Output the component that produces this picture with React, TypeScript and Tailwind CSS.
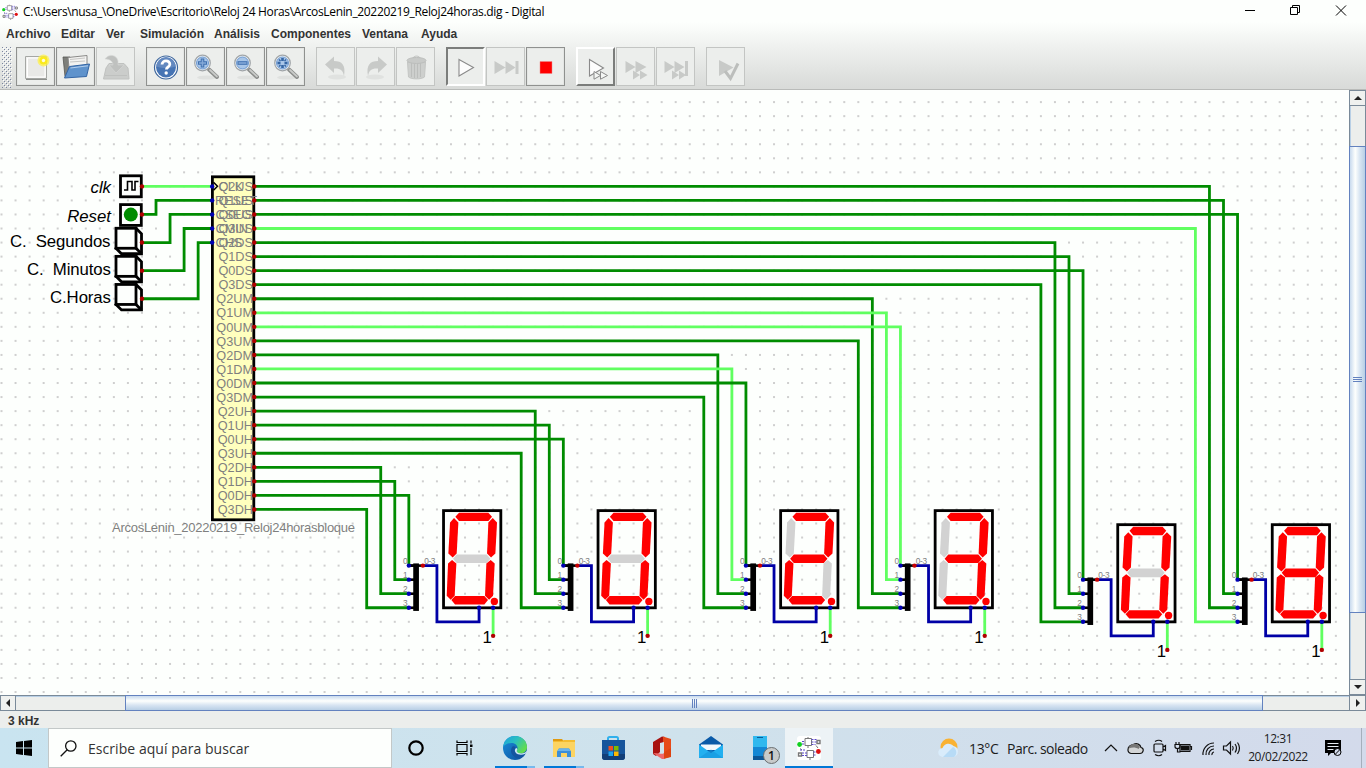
import type { ReactNode } from 'react';

const P = 14.046;
const X = (n: number) => 1.5 + P * n;
const Y = (n: number) => 12.1 + P * n;

const DARK = '#008c00';
const LIGHT = '#60ff60';
const BLUE = '#0000a6';
const RED = '#b00000';

const OUTPUTS = [
  'Q2US', 'Q1US', 'Q0US', 'Q3US', 'Q2DS', 'Q1DS', 'Q0DS', 'Q3DS',
  'Q2UM', 'Q1UM', 'Q0UM', 'Q3UM', 'Q2DM', 'Q1DM', 'Q0DM', 'Q3DM',
  'Q2UH', 'Q1UH', 'Q0UH', 'Q3UH', 'Q2DH', 'Q1DH', 'Q0DH', 'Q3DH',
];
const HIGH = [3, 9, 10, 13];

const SEGMENTS: Record<string, string> = {
  a: '196,50 207,38 295,38 306,50 295,63 207,63',
  b: '308,54 321,67 316,160 303,172 291,160 295,67',
  f: '192,54 205,67 200,160 188,172 175,160 180,67',
  g: '189,176 200,163 290,163 301,176 290,189 200,189',
  e: '186,180 199,190 194,287 182,299 170,287 174,190',
  c: '302,180 314,190 309,287 297,299 285,287 289,190',
  d: '184,300 195,288 283,288 294,300 283,313 195,313',
};

const BLOCKS = [
  { col: 29, row: 33, first: 20, on: 'abcdef' },
  { col: 40, row: 33, first: 16, on: 'abcdef' },
  { col: 53, row: 33, first: 12, on: 'abged' },
  { col: 64, row: 33, first: 8, on: 'abgcd' },
  { col: 77, row: 34, first: 4, on: 'abcdef' },
  { col: 88, row: 34, first: 0, on: 'abcdefg' },
];

function Wire({ pts, color = DARK }: { pts: [number, number][]; color?: string }) {
  return (
    <polyline
      points={pts.map(([c, r]) => `${X(c)},${Y(r)}`).join(' ')}
      fill="none"
      stroke={color}
      strokeWidth="2.8"
    />
  );
}

function Pin({ c, r, color }: { c: number; r: number; color: string }) {
  return <circle cx={X(c)} cy={Y(r)} r="2.2" fill={color} />;
}

function Block({ col, row, first, on }: (typeof BLOCKS)[number]) {
  const x = X(col);
  const y = Y(row);
  return (
    <g>
      {[2, 1, 0, 3].map((bit, k) => (
        <Wire
          key={bit}
          color={HIGH.includes(first + k) ? LIGHT : DARK}
          pts={[[18, 6 + first + k], [col - bit, 6 + first + k], [col - bit, row + bit], [col, row + bit]]}
        />
      ))}
      <Wire color={BLUE} pts={[[col + 1, row], [col + 2, row], [col + 2, row + 4], [col + 5, row + 4], [col + 5, row + 3]]} />
      <Wire color={LIGHT} pts={[[col + 6, row + 3], [col + 6, row + 5]]} />
      <rect x={x + 4.4} y={y - 2.2} width="5.7" height="47.5" fill="#000" />
      <path d={`M${x + 1} ${y}H${x + 13}`} stroke="#000" strokeWidth="2.6" />
      {[0, 1, 2, 3].map((b) => (
        <g key={b}>
          <path d={`M${x + 1} ${y + b * P}h6`} stroke="#000" strokeWidth="2.6" />
          <Pin c={col} r={row + b} color="#0000b4" />
          <text x={x - 1.2} y={y + b * P - 1.6} textAnchor="end" fontSize="8.3" fill="#808080">{b}</text>
        </g>
      ))}
      <Pin c={col + 1} r={row} color="#c80000" />
      <text x={x + 15.3} y={y - 1.6} fontSize="8.3" fill="#808080" textLength="11.3">0-3</text>
      <rect x={x + 34.7} y={y - 55} width="57.3" height="97.2" fill="none" stroke="#000" strokeWidth="2.8" />
      <g transform={`translate(${x - 18.8} ${y - 65.5}) scale(0.33333)`}>
        {Object.entries(SEGMENTS).map(([k, p]) => (
          <polygon key={k} points={p} fill={on.includes(k) ? '#ff0000' : '#d2d2d2'} />
        ))}
        <circle cx="313" cy="304" r="11" fill="#ff0000" />
      </g>
      <Pin c={col + 5} r={row + 3} color="#0000b4" />
      <Pin c={col + 6} r={row + 3} color="#0000b4" />
      <Pin c={col + 6} r={row + 5} color={RED} />
      <text x={X(col + 6) - 1.2} y={Y(row + 5) + 7} textAnchor="end" fontSize="16.8" fill="#000">1</text>
    </g>
  );
}

function PushButton({ row }: { row: number }) {
  const t = Y(row) - 14.3;
  return (
    <g fill="#fdfffd" stroke="#000" strokeWidth="2.8" strokeLinejoin="miter">
      <path d={`M136 ${t}l5.500 5.500v20H121.500l-5.500-5.500z`} />
      <rect x="116" y={t} width="20" height="20" />
      <path d={`M136 ${t + 20}l5.500 5.500`} />
    </g>
  );
}

function Circuit() {
  return (
    <svg width="1349" height="605" className="block shrink-0 bg-[#fdfffd] font-['Liberation_Sans',sans-serif]">
      <g fill="#cfcfcf">
        {Array.from({ length: 43 }, (_, r) =>
          Array.from({ length: 96 }, (_, c) => (
            <rect key={`${r}-${c}`} x={X(c) - 1} y={Y(r) - 1} width="2" height="2" />
          ))
        )}
      </g>
      <Wire color={LIGHT} pts={[[10, 6], [15, 6]]} />
      <Wire pts={[[10, 8], [11, 8], [11, 7], [15, 7]]} />
      <Wire pts={[[10, 10], [12, 10], [12, 8], [15, 8]]} />
      <Wire pts={[[10, 12], [13, 12], [13, 9], [15, 9]]} />
      <Wire pts={[[10, 14], [14, 14], [14, 10], [15, 10]]} />

      <g fontSize="16.8" fill="#000" textAnchor="end">
        <text x="111" y="103" fontStyle="italic">clk</text>
        <text x="111" y="132" fontStyle="italic">Reset</text>
        <text x="110.5" y="157" textLength="100.5">C.&#160; Segundos</text>
        <text x="111" y="185" textLength="84">C.&#160; Minutos</text>
        <text x="111" y="213" textLength="61">C.Horas</text>
      </g>

      <rect x="120.5" y="85.8" width="20.8" height="21" fill="#fdfffd" stroke="#000" strokeWidth="2.8" />
      <path d="M124 100h3.500v-8.500h4.500V100h3v-8.500h3.500" fill="none" stroke="#000" strokeWidth="1.6" />
      <rect x="120.5" y="114.600" width="20.8" height="20.8" fill="#fdfffd" stroke="#000" strokeWidth="2.8" />
      <circle cx="130.8" cy="124.6" r="7" fill="#008c00" />
      <PushButton row={10} />
      <PushButton row={12} />
      <PushButton row={14} />

      {BLOCKS.slice().reverse().map((b) => (
        <Block key={b.col} {...b} />
      ))}

      <rect x="212.4" y="86.8" width="41.4" height="343" fill="#ffffbe" stroke="#000" strokeWidth="2.8" />
      <path d="M213.500 92.300l4 4-4 4" fill="none" stroke="#000" strokeWidth="1.5" />
      <g fontSize="12.7" fill="#7f7f7f">
        {OUTPUTS.map((t, i) => (
          <text key={t} x="253" y={Y(6 + i) + 4.7} textAnchor="end">{t}</text>
        ))}
        <text x="218.5" y={Y(6) + 4.7}>CLK</text>
        <text x="215" y={Y(7) + 4.7} textLength="42">RESET</text>
        <text x="215.5" y={Y(8) + 4.7}>CSEG</text>
        <text x="215.5" y={Y(9) + 4.7}>CMIN</text>
        <text x="215.5" y={Y(10) + 4.7}>CHS</text>
        <text x="112" y="442" fontSize="13" textLength="243">ArcosLenin_20220219_Reloj24horasbloque</text>
      </g>
      {[6, 7, 8, 9, 10].map((r) => (
        <Pin key={r} c={15} r={r} color="#0000b4" />
      ))}
      {[6, 8, 10, 12, 14].map((r) => (
        <Pin key={r} c={10} r={r} color={RED} />
      ))}
      {OUTPUTS.map((t, i) => (
        <Pin key={t} c={18} r={6 + i} color={RED} />
      ))}
    </svg>
  );
}

function DigitalIcon({ size }: { size: number }) {
  return (
    <svg width={size} height={size} viewBox="0 0 24 24">
      <rect width="24" height="24" rx="3" fill="#fff" />
      <g fill="none" stroke="#777" strokeWidth="1">
        <path d="M8 2.500h6.500v7H8zM11 1v1M11 10v2" />
        <path d="M10 14.500h6.500v7H10z" />
        <path d="M20 4.500h3v3h-3zM1.500 17h3v3h-3z" strokeWidth="1.4" />
        <path d="M21 12l-2-2.500M3 12.500l2 1.500M13 22v2" />
      </g>
      <path d="M5 5.500h3M5 8h3M14.500 3.500H20M14.500 6H20M14.500 8.500h4M5 17h5M5 19.500h5M3 14h6M16.500 16h4M16.500 19h3" stroke="#5a48c8" strokeWidth="1" strokeDasharray="2 1" />
      <circle cx="2.6" cy="8.5" r="2.4" fill="#10d020" />
      <circle cx="21.4" cy="15.5" r="2.4" fill="#e01010" />
    </svg>
  );
}

const BTN: Record<string, string> = {
  normal: 'border border-[#8f918f] outline outline-1 -outline-offset-2 outline-[#dfe1df]/60',
  off: 'border border-[#c3c5c3]',
  down: 'border-2 border-t-[#7b7d7b] border-l-[#7b7d7b] border-b-white border-r-white',
  up: 'border-2 border-t-white border-l-white border-b-[#7b7d7b] border-r-[#7b7d7b]',
};

function Tool({ kind = 'normal', children }: { kind?: string; children: ReactNode }) {
  return (
    <button className={`flex h-[39px] w-[39px] shrink-0 items-center justify-center bg-[#eceeec] ${BTN[kind]}`}>
      <svg width="32" height="32" viewBox="0 0 32 32" className="shrink-0" fill="none">{children}</svg>
    </button>
  );
}

function Lens({ children }: { children: ReactNode }) {
  return (
    <>
      <ellipse cx="17" cy="26.5" rx="10" ry="2" fill="#dfe1df" />
      <path d="M19 18.500l8 7.500" stroke="#8a8c8a" strokeWidth="4" strokeLinecap="round" />
      <path d="M20 19l7 6.500" stroke="#c8cac8" strokeWidth="1.8" strokeLinecap="round" />
      <circle cx="12.5" cy="12" r="7.8" fill="#eef2f5" stroke="#a0a5a8" strokeWidth="1.2" />
      <circle cx="12.5" cy="12" r="6" fill="#a9c6e8" stroke="#6f9bd2" />
      {children}
    </>
  );
}

const Sep = () => <div className="w-[9px] shrink-0" />;

const MENU: [string, string][] = [
  ['Archivo', 'w-[55px]'], ['Editar', 'w-[45px]'], ['Ver', 'w-[34px]'], ['Simulación', 'w-[74px]'],
  ['Análisis', 'w-[57px]'], ['Componentes', 'w-[91px]'], ['Ventana', 'w-[59px]'], ['Ayuda', 'w-[50px]'],
];

function Toolbar() {
  return (
    <div className="flex h-[46px] items-start gap-px pt-[4px] pl-[2px]">
      <svg width="13" height="41" className="shrink-0">
        <defs>
          <pattern id="grip" width="4" height="4" patternUnits="userSpaceOnUse">
            <rect width="1" height="1" fill="#7c86a0" /><rect x="2" y="2" width="1" height="1" fill="#7c86a0" />
            <rect x="1" y="1" width="1" height="1" fill="#fff" /><rect x="3" y="3" width="1" height="1" fill="#fff" />
          </pattern>
        </defs>
        <rect width="10" height="41" fill="url(#grip)" />
      </svg>
      <Tool>
        <path d="M5.500 5.500h21v22h-21z" fill="#f0f0ee" stroke="#a5a7a4" />
        <path d="M7.500 7h17.500v19H7.500z" fill="#e9e9e7" stroke="#fff" /><path d="M6 28.500h21" stroke="#8d8f8c" />
        <circle cx="23.500" cy="9.500" r="6" fill="#fdf04a" opacity=".75" /><circle cx="23.500" cy="9.500" r="4" fill="#fbea1c" /><circle cx="23.500" cy="9.500" r="1.700" fill="#fffce0" />
      </Tool>
      <Tool>
        <path d="M3 6h7l2 2h12v16l-19 1.500z" fill="#7d7f7a" stroke="#555753" strokeWidth=".8" />
        <path d="M8 6.500l19-2v12H9z" fill="#f3f3f1" stroke="#8a8a88" />
        <path d="M10 8.500l15-1.500M10 11l15-1" stroke="#c6c6c4" />
        <path d="M9.500 15.500l20-2.500-3 12.500L4.500 27z" fill="#5f93cc" stroke="#3465a4" />
        <path d="M10.500 17l17.500-2.200" stroke="#b4cfee" />
      </Tool>
      <Tool kind="off">
        <path d="M6 17l3-4.500h15l4 4.500 1 11H3.500z" fill="#cbcdcb" stroke="#c0c2c0" />
        <path d="M5 8c4-6 12-4 13 2v4h6l-8 8-7-8h4c0-4-4-6-8-6z" fill="#bfc1bf" stroke="#d6d8d6" strokeWidth=".6" />
        <path d="M5 24.500h22" stroke="#bfc1bf" />
      </Tool>
      <Sep />
      <Tool>
        <circle cx="16" cy="16.500" r="11.500" fill="#fff" stroke="#3c659c" strokeWidth="1.2" />
        <circle cx="16" cy="16.500" r="9.900" fill="#4674b4" />
        <path d="M6.500 15.500a9.500 9.500 0 0 1 19 0c-7 2-12 2-19 0z" fill="#6389c0" />
        <path d="M12 13.500c.2-5 8.200-4.500 7.800 0-.2 2.700-3.400 2.300-3.400 5" stroke="#fff" strokeWidth="2.800" /><circle cx="16.200" cy="22" r="1.700" fill="#fff" />
      </Tool>
      <Tool><Lens><path d="M12.500 7.500v9M8 12h9" stroke="#3f70b0" strokeWidth="3.600" /><path d="M12.500 8.500v7M9 12h7" stroke="#84a9d8" strokeWidth="1.600" /></Lens></Tool>
      <Tool><Lens><path d="M7.500 12h10" stroke="#3f70b0" strokeWidth="3.600" /><path d="M8.500 12h8" stroke="#84a9d8" strokeWidth="1.600" /></Lens></Tool>
      <Tool><Lens><path d="M12.500 7v3M12.500 14v3M7.500 12h3M14.500 12h3" stroke="#3465a4" strokeWidth="2.600" /><path d="M9 8.500l1.500 1.500M16 8.500L14.500 10M9 15.500l1.500-1.500M16 15.500L14.500 14" stroke="#3465a4" strokeWidth="1.400" /></Lens></Tool>
      <Sep />
      <Tool kind="off">
        <ellipse cx="17" cy="26" rx="9" ry="2.500" fill="#e0e2e0" />
        <path d="M5 13.500l9-8v4.500c8 0 12 4 10 15-1-6-4-8-10-7.500V22z" fill="#c8cac8" />
      </Tool>
      <Tool kind="off">
        <ellipse cx="15" cy="26" rx="9" ry="2.500" fill="#e0e2e0" />
        <path d="M27 13.500l-9-8v4.500c-8 0-12 4-10 15 1-6 4-8 10-7.500V22z" fill="#c8cac8" />
      </Tool>
      <Tool kind="off">
        <path d="M7.500 11h18l-1 15c-3 2.500-13 2.500-16 0z" fill="#cdcfcd" stroke="#c4c6c4" />
        <path d="M11.500 12v14M14.500 13v14M17.500 13v14M20.500 12v14" stroke="#bcbebc" />
        <ellipse cx="16.500" cy="9.500" rx="9.500" ry="3" fill="#c8cac8" stroke="#bcbebc" /><path d="M13 7c1-2.500 6-2.500 7 0" stroke="#bcbebc" />
      </Tool>
      <Sep />
      <Tool kind="down"><path d="M9 8.500l14.500 8L9 25z" fill="#fdfdfd" stroke="#8a8a8a" strokeWidth="1.1" /></Tool>
      <Tool kind="off"><path d="M4.500 10l11 6.500-11 6.500zM15.500 10l10 6.500-10 6.500z" fill="#c8cac8" /><path d="M27 10v13" stroke="#c8cac8" strokeWidth="3" /></Tool>
      <Tool><path d="M10 10.500h12v12H10z" fill="#f00" stroke="#e88" strokeWidth=".5" /></Tool>
      <Sep />
      <Tool kind="up">
        <path d="M9.500 8.500l14 8.500-14 8z" fill="#fdfdfd" stroke="#8a8a8a" strokeWidth="1.1" />
        <path d="M14 20.500l6.500 4-6.500 3.700zM20.500 20.500l7 4-7 3.700z" fill="#f4f6f4" stroke="#8a8a8a" strokeWidth="1" />
      </Tool>
      <Tool kind="off"><path d="M5.500 10l10 6-10 6zM15.500 10l11 6-11 6zM13 19.500l7 4.500-7 4.500zM20 19.500l7.500 4.500-7.500 4.500z" fill="#c8cac8" /></Tool>
      <Tool kind="off"><path d="M4.500 10l10 6-10 6zM14.500 10l10 6-10 6zM12 19.500l7 4.500-7 4.500zM19 19.500l7 4.500-7 4.500z" fill="#c8cac8" /><path d="M26.500 10v15" stroke="#c8cac8" strokeWidth="3" /></Tool>
      <Sep />
      <Tool kind="off">
        <path d="M9 9l14.500 7.500L9 25z" fill="#c8cac8" /><path d="M15 20l5.500 7.500L28 12.500" stroke="#bcbebc" strokeWidth="3" />
      </Tool>
    </div>
  );
}

function Tri({ d, className }: { d: string; className: string }) {
  return (
    <div className={`flex shrink-0 items-center justify-center border border-[#7a8a99] bg-[#eff1ef] ${className}`}>
      <svg width="8" height="8" viewBox="0 0 8 8"><path d={d} fill="#222" /></svg>
    </div>
  );
}

function TaskIcon({ children, run = false }: { children: ReactNode; run?: boolean }) {
  return (
    <div className="flex h-10 w-[49px] shrink-0 flex-col items-center">
      <div className="flex h-[38px] items-center justify-center pt-0.5">
        <svg width="26" height="26" viewBox="0 0 26 26" fill="none">{children}</svg>
      </div>
      {run && <div className="flex h-0.5 w-10"><div className="w-8 bg-[#0078d7]" /><div className="w-2 bg-[#76b9ed]" /></div>}
    </div>
  );
}

function Taskbar() {
  return (
    <div className="flex h-10 items-center bg-linear-to-r from-[#c9e4f0] via-[#cfe2ec] to-[#d3daeb] font-['Open_Sans',sans-serif] text-[#1c1c1c]">
      <div className="flex w-12 shrink-0 justify-center">
        <svg width="16" height="16" viewBox="0 0 16 16"><path d="M0 2l7-1v6.500H0zM8 .9L16 0v7.500H8zM0 8.500h7V15l-7-1zM8 8.500h8V16l-8-1z" fill="#000" /></svg>
      </div>
      <div className="flex h-10 w-[344px] shrink-0 items-center border border-[#c3c8c8] bg-[#fdfffd] pl-[11px]">
        <svg width="17" height="17" viewBox="0 0 17 17" fill="none" stroke="#111" strokeWidth="1.3"><circle cx="10.8" cy="6" r="5.2" /><path d="M7.200 9.800L.7 16.300" /></svg>
        <span className="ml-[11px] text-[14px] tracking-[0.05px] whitespace-nowrap text-[#333]">Escribe aquí para buscar</span>
      </div>
      <div className="flex w-12 shrink-0 justify-center"><svg width="18" height="18"><circle cx="9" cy="9" r="6.700" fill="none" stroke="#000" strokeWidth="2.2" /></svg></div>
      <div className="mr-0.5 flex w-12 shrink-0 justify-center">
        <svg width="17" height="16" viewBox="0 0 17 16" fill="none" stroke="#000" strokeWidth="1.2"><path d="M1 4.500h10v7H1zM1 .5v2h10v-2M1 15.500v-2h10v2M15 .5v3M15 8v7" /><path d="M14 4.500h2.500V7H14z" fill="#000" stroke="none" /></svg>
      </div>
      <TaskIcon run>
        <defs>
          <linearGradient id="eg" x1="0" y1="0" x2="1" y2=".6"><stop offset="0" stopColor="#1ba0e0" /><stop offset=".5" stopColor="#2bbfc0" /><stop offset="1" stopColor="#62dd4c" /></linearGradient>
          <linearGradient id="eb" x1="0" y1="0" x2="1" y2="1"><stop offset="0" stopColor="#1b8fdc" /><stop offset="1" stopColor="#0c4c9a" /></linearGradient>
        </defs>
        <circle cx="13" cy="13" r="12" fill="url(#eb)" />
        <path d="M1.200 12C2 5 7 1 13 1c8 0 12 6 12 11 0 4-3 6.500-6.500 6.500-3 0-4.500-1.500-3.500-3.500 2-4-2-7-5.500-7-4 0-7 2-8.300 4z" fill="url(#eg)" />
        <path d="M10 12c-2 4-1 8 4 11 4 1 7-.5 9-4-3 1.500-7.500 1-9.500-1.500-1.500-2-1-3.500.3-4.500-.8-2-2.800-2.500-3.800-1z" fill="#1554a0" />
        <path d="M14 13c-1.500 1.500-1.500 3.500 0 5s5 2.500 9.500.8l2.500-3.800c-3 3.500-6.500 4-9.500 3-2-1-2-2-1.300-3.200.3-.8 0-1.500-1.200-1.800z" fill="#d0e8f2" />
      </TaskIcon>
      <TaskIcon run>
        <path d="M2 4h9l2 2.500H2z" fill="#e09a10" /><path d="M2 6h22v16H2z" fill="#fcd462" /><path d="M2 6h9l2-1h11v2H2z" fill="#f4bc30" />
        <path d="M6 22v-5.500l2-3h10l2 3V22h-4v-4h-6v4z" fill="#3a8ed8" /><path d="M8 13.500h10l1.500 2.500h-13z" fill="#6ab4ec" />
      </TaskIcon>
      <TaskIcon>
        <path d="M8 8V3.500q0-1.500 1.500-1.500h7Q18 2 18 3.500V8" stroke="#30b0ec" strokeWidth="2" />
        <path d="M2 5h23v17q0 3-3 3H5q-3 0-3-3z" fill="#17559c" /><path d="M2 19h23v3q0 3-3 3H5q-3 0-3-3z" fill="#133f78" />
        <path d="M8.500 11H13v4.500H8.500z" fill="#f25022" /><path d="M14 11h4.500v4.500H14z" fill="#7fba00" /><path d="M8.500 16.500H13V21H8.500z" fill="#1da5f0" /><path d="M14 16.500h4.500V21H14z" fill="#ffb900" />
      </TaskIcon>
      <TaskIcon>
        <path d="M4 7l9-5.500 3 .5v5l-5 2v8l-4 4-3-2z" fill="#a81210" /><path d="M14 1.500l8 2.500v17.500L14 24z" fill="#e64a19" /><path d="M22 13v9l-8 2v-6z" fill="#dc4310" /><path d="M4 18l7 .5h4V24h-2z" fill="#f06868" />
        <path d="M11 8l4-1v11.500h-4z" fill="#d0e2ec" />
      </TaskIcon>
      <TaskIcon>
        <path d="M1 9.500L13 1l12 8.500V23H1z" fill="#0a5aa8" /><path d="M3 9.500h20V15H3z" fill="#f2f8fc" /><path d="M1 9.500L13 18 25 9.500V23H1z" fill="#22b0f0" /><path d="M1 23l12-8.500L25 23z" fill="#1696dc" opacity=".6" />
      </TaskIcon>
      <TaskIcon>
        <path d="M6 1h14v24H6z" fill="#1487d4" /><path d="M6 1h14v11H6z" fill="#30b8ee" /><path d="M6 21h14v4H6z" fill="#0d5696" /><path d="M10 2.500h6" stroke="#0b5c98" />
      </TaskIcon>
      <div className="mr-[4px] mb-[4px] -ml-[21px] flex h-[17px] w-[17px] shrink-0 items-center justify-center self-end rounded-full border border-[#6a6e70] bg-[#c8caca] text-[12px] font-semibold text-[#111]">1</div>
      <div className="ml-px flex h-10 w-12 shrink-0 flex-col bg-[#edf3f6]">
        <div className="flex h-[38px] items-center justify-center pt-0.5"><DigitalIcon size={24} /></div>
        <div className="h-0.5 bg-[#0078d7]" />
      </div>
      <div className="flex h-10 flex-1 items-center pl-[104px]">
        <svg width="24" height="22" viewBox="0 0 24 22" className="shrink-0"><circle cx="12" cy="10" r="8.500" fill="#f9b233" /><path d="M6 20a4.500 4.500 0 0 1-.5-9 6.500 6.500 0 0 1 11-2A5.700 5.700 0 0 1 17 20z" fill="#d9ecfb" /><path d="M6 20l10-10a6 6 0 0 1 1 10z" fill="#b7dbf6" /></svg>
        <span className="ml-[8px] w-[38px] shrink-0 text-[14px] tracking-[-0.35px] whitespace-nowrap">13°C</span>
        <span className="w-[97px] shrink-0 text-[14px] tracking-[-0.5px] whitespace-nowrap">Parc. soleado</span>
        <svg width="140" height="20" viewBox="1104 0 140 20" className="shrink-0" fill="none" stroke="#111" strokeWidth="1.2">
          <path d="M1105 13l6-6 6 6" />
          <path d="M1131 15.500a3.500 3.500 0 0 1-3-4c0-3 3-5 5.500-5 3-2 7 0 7.500 3 4 1 2 6-1 6z" fill="#d3d5d6" /><path d="M1128.500 10.500c1-5 9-7 11.500-1.500l-1.500 2c-3-2-6-2-10-.5z" fill="#777" stroke="none" />
          <path d="M1155 6h7q1 0 1 1v6q0 1-1 1h-7q-1 0-1-1V7q0-1 1-1zM1163 9l2.500-1.500v5L1163 11M1155 3.500q4-2.500 7 0M1155 16.500q4 2.500 7 0" />
          <path d="M1180 6.500h10v7h-10zM1190.500 8.500h1v3.500" /><path d="M1181.500 8h7v4h-7z" fill="#111" /><path d="M1176 4v3M1179 4v3M1175 6.500h5v2q0 2-2.500 2t-2.500-2zM1177.500 10v4h3" />
          <path d="M1203 17a11 11 0 0 1 11-12M1206 17a8 8 0 0 1 8-9M1209 17a5 5 0 0 1 5-6M1212 17a2.500 2.500 0 0 1 2-3" />
          <path d="M1223.500 8h3l4-4v12l-4-4h-3zM1232.500 8q1.500 2 0 4.500M1235 6q3 4 0 8.500M1237.500 4.500q4 5.500 0 11.500" />
        </svg>
        <div className="ml-[3px] w-[62px] shrink-0 text-center text-[12px] leading-[18px] tracking-[-0.4px]"><div>12:31</div><div>20/02/2022</div></div>
        <svg width="18" height="18" viewBox="0 0 18 18" className="ml-[15px] shrink-0"><path d="M1 1h16v13H7l-3 3v-3H1z" fill="#000" /><path d="M3.500 4.500h11M3.500 7.500h11M3.500 10.500h6" stroke="#e5eaf0" strokeWidth="1.2" /><circle cx="13.500" cy="13" r="3.500" fill="#d3daeb" stroke="#000" /><path d="M11 15.500l5-5" stroke="#000" /></svg>
        <div className="ml-auto h-10 w-[5px] border-l border-[#a5afbc]" />
      </div>
    </div>
  );
}

export default function App() {
  return (
    <div className="flex h-[768px] w-[1366px] flex-col overflow-hidden bg-[#eceeec] font-['Liberation_Sans',sans-serif]">
      <header className="h-[90px] shrink-0 border-b border-[#b9bbb9] bg-[linear-gradient(#fdfffd_25%,#f0f2f0_50%,#d9dbd9_98%)]">
        <div className="flex h-6 items-center pl-[2px]">
          <DigitalIcon size={16} />
          <span className="ml-[5px] font-['Open_Sans',sans-serif] text-[12px] tracking-[-0.335px] whitespace-nowrap text-black">C:\Users\nusa_\OneDrive\Escritorio\Reloj 24 Horas\ArcosLenin_20220219_Reloj24horas.dig - Digital</span>
          <svg width="104" height="12" viewBox="0 0 104 12" className="-mt-[4px] mr-[18px] ml-auto" fill="none" stroke="#000">
            <path d="M1 6.500h10M46.500 3.500h7v7h-7zM48.500 3.500v-2h7v7h-2M92 1.500l10 10M102 1.500l-10 10" />
          </svg>
        </div>
        <nav className="flex h-[19px] items-center pl-[6px] text-[12px] font-bold text-[#333]">
          {MENU.map(([t, w]) => (
            <span key={t} className={`${w} shrink-0 whitespace-nowrap`}>{t}</span>
          ))}
        </nav>
        <Toolbar />
      </header>

      <main className="flex h-[605px] shrink-0">
        <Circuit />
        <div className="flex w-[17px] flex-col border-x border-[#7a8a99] bg-[#eceeec]">
          <Tri className="h-4 w-[15px] border-x-0" d="M4 2L8 6H0z" />
          <div className="h-10 shrink-0 border-l border-[#b8cfe5]" />
          <div className="-ml-px flex h-[467px] w-[17px] shrink-0 flex-col items-center justify-center gap-px border border-[#6382bf] bg-[linear-gradient(90deg,#c8daee,#fdfffd_35%,#d8e5f2_65%,#b8cfe5)]">
            <i className="h-px w-[9px] bg-[#6382bf]" /><i className="h-px w-[9px] bg-[#6382bf]" /><i className="h-px w-[9px] bg-[#6382bf]" />
          </div>
          <div className="flex-1 border-l border-[#b8cfe5]" />
          <Tri className="h-4 w-[15px] border-x-0" d="M4 6L8 2H0z" />
        </div>
      </main>

      <div className="flex h-4 shrink-0 border-y border-[#7a8a99]">
        <Tri className="w-4 border-y-0" d="M2 4L6 0v8z" />
        <div className="w-[109px] shrink-0 border-t border-[#b8cfe5]" />
        <div className="-my-px flex w-[1138px] shrink-0 items-center justify-center gap-px border border-[#6382bf] bg-[linear-gradient(#c8daee,#fdfffd_35%,#d8e5f2_65%,#b8cfe5)]">
          <i className="h-[9px] w-px bg-[#6382bf]" /><i className="h-[9px] w-px bg-[#6382bf]" /><i className="h-[9px] w-px bg-[#6382bf]" />
        </div>
        <div className="flex-1 border-t border-[#b8cfe5]" />
        <Tri className="w-[17px] border-y-0" d="M6 4L2 0v8z" />
      </div>

      <div className="flex h-[17px] shrink-0 items-center pt-0.5 pl-2 text-[12px] font-bold text-[#333]">3 kHz</div>
      <Taskbar />
    </div>
  );
}
